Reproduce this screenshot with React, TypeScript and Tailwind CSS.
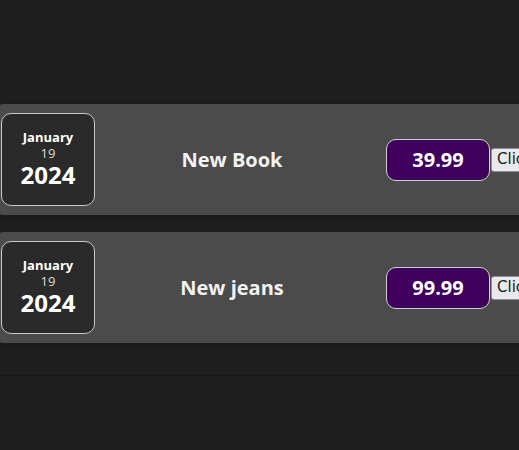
import React from "react";

type Item = { title: string; price: string };

const items: Item[] = [
  { title: "New Book", price: "39.99" },
  { title: "New jeans", price: "99.99" },
];

function ExpenseDate() {
  return (
    <div className="flex h-[93px] w-[94px] shrink-0 flex-col items-center justify-center rounded-[10px] border border-[#c8c8c8] bg-[#2a2a2a] text-white">
      <div className="text-[13px] font-bold leading-[15px]">January</div>
      <div className="text-[13px] leading-[16px] text-[#dcdcdc]">19</div>
      <div className="text-[24px] font-bold leading-[28px]">2024</div>
    </div>
  );
}

function ExpenseItem({ item }: { item: Item }) {
  return (
    <div className="flex h-[111px] w-[640px] shrink-0 items-center rounded-[12px] bg-[#4b4b4b] pl-[9px] shadow-[0_2px_8px_rgba(0,0,0,0.25)]">
      <ExpenseDate />
      <div className="w-[291px] shrink-0 pr-[17px] text-center text-[20px] font-bold text-[#f2f2f2]">
        {item.title}
      </div>
      <div className="flex h-[42px] w-[104px] shrink-0 items-center justify-center rounded-[10px] border border-[#d0d0d0] bg-[#40005d] text-[20px] font-bold text-white">
        {item.price}
      </div>
      <button className="ml-[1px] h-[24px] shrink-0 rounded-[3px] border border-[#8f8f9d] bg-[#e9e9ed] px-[5px] text-[15px] leading-none text-[#1a1a1a] [font-family:'DejaVu_Sans',sans-serif]">
        Click me
      </button>
    </div>
  );
}

export default function App() {
  return (
    <div className="min-h-[450px] w-full overflow-hidden bg-[#1f1f1f] [font-family:'Open_Sans',sans-serif]">
      <div className="ml-[-8px] flex flex-col gap-[17px] border-b border-[#181818] pt-[104px] pb-[32px]">
        {items.map((it) => (
          <ExpenseItem key={it.title} item={it} />
        ))}
      </div>
    </div>
  );
}
